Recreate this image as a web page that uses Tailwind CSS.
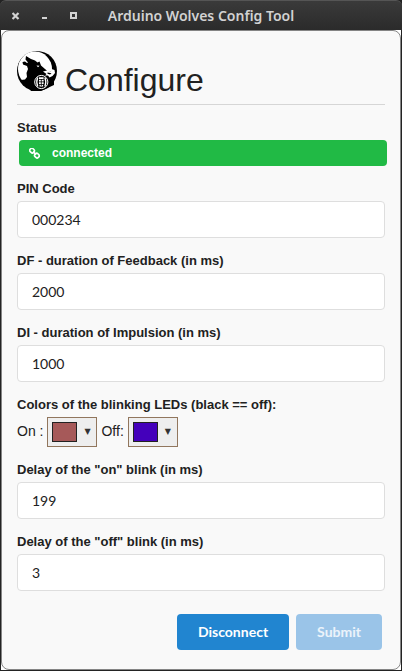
<!DOCTYPE html>
<html lang="en">
<head>
<meta charset="utf-8">
<meta name="viewport" content="width=device-width, initial-scale=1">
<title>Arduino Wolves Config Tool</title>
<script src="https://cdn.jsdelivr.net/npm/@tailwindcss/browser@4"></script>
</head>
<body class="flex min-h-screen flex-col bg-[#232323] font-['Liberation_Sans',Arial,sans-serif] text-sm text-[#212121]">
  <header class="flex h-[30px] items-center rounded-t-md border-t border-[#555] bg-linear-to-b from-[#3a3a3a] to-[#2b2b2b] px-3 text-[#d2d2d2]">
    <div class="flex gap-[21px]">
      <button type="button" aria-label="Close" class="size-2"><svg class="block size-2" viewBox="0 0 8 8" fill="none" stroke="currentColor" stroke-width="2.2"><path d="M0.500 1l6 6M6.500 1l-6 6"/></svg></button>
      <button type="button" aria-label="Minimize" class="size-2"><svg class="block size-2" viewBox="0 0 8 8" fill="currentColor"><path d="M1 5h5v2H1z"/></svg></button>
      <button type="button" aria-label="Maximize" class="size-2"><svg class="block size-2" viewBox="0 0 8 8" fill="none" stroke="currentColor" stroke-width="2"><path d="M1 1h5v5h-5z"/></svg></button>
    </div>
    <div class="grow pr-[66px] text-center font-['Noto_Sans',sans-serif] text-sm font-semibold whitespace-nowrap">Arduino Wolves Config Tool</div>
  </header>

  <div class="mx-px mb-px flex grow flex-col bg-white">
    <main class="grow rounded-lg border border-[#858585] bg-[#f9f9f9] px-[15px] pt-5 pb-4">
      <h1 class="flex items-end gap-2 border-b border-[#d6d6d6] pb-[13px] text-[32px] leading-10">
        <svg class="size-10 shrink-0" viewBox="0 0 40 40" role="img" aria-label="Wolf logo">
          <circle cx="20" cy="20" r="20" fill="#000"/>
          <ellipse cx="18" cy="18" rx="17" ry="17.500" fill="#fff"/>
          <path fill="#000" d="M9 5L11.500 6.500 14 8 18 9.500 20.500 11.500 22.500 10.500 24 14.500 28 18 31 20 37 21V34L24 40H14L10 35 6 31 4 29 8 28.500 10 26 9.500 22 11 18 10 15 6 13.500 5.500 11 8 10.500 10 12 11 11.500 8.500 8.500Z"/>
          <path fill="#fff" d="M19.500 14.500L22.500 14.700 21 16.200ZM26 20.500L30 19.500 28 17.500 31 18 33 20.500 34.500 20 33 17.500 37.500 19 38 22 35.500 25 32.500 26.500 31 24.500 28 24.500 29.500 23Z"/>
          <path fill="#000" d="M30.500 21.500l4 .8-1.500 1.200-2.500-.7z"/>
          <circle cx="24.300" cy="31" r="6.600" fill="#000" stroke="#fff" stroke-width="1"/>
          <path fill="none" stroke="#fff" stroke-width="1.300" d="M20.700 26.500c-1.200 3-1.200 6 0 9M27.900 26.500c1.200 3 1.200 6 0 9"/>
          <path fill="none" stroke="#fff" stroke-width="1.700" d="M22 27.200h4.600M22 29.700h4.600M22 32.200h4.600M22.500 34.700h3.600"/>
          <path stroke="#000" stroke-width=".8" d="M24.300 28v7"/>
        </svg>
        <span class="h-[31px]">Configure</span>
      </h1>

      <form class="mt-[14px] flex flex-col gap-[14px]">
        <section class="flex flex-col gap-1">
          <h2 class="text-[13px] leading-[17px] font-bold">Status</h2>
          <div role="status" class="-mr-0.5 ml-0.5 flex h-[26px] items-center gap-3 rounded bg-[#21ba45] px-2.5 text-xs font-bold text-white">
            <svg class="size-[11px]" viewBox="0 0 11 11" fill="none" stroke="currentColor" stroke-width="1.600" aria-hidden="true"><rect x=".8" y=".6" width="4.600" height="4" rx="1.700" transform="rotate(45 3.100 2.600)"/><rect x="5.600" y="5.600" width="4.600" height="4" rx="1.700" transform="rotate(45 7.900 7.600)"/><path d="M4 3.700l3.200 3"/></svg>
            <span>connected</span>
          </div>
        </section>

        <div class="flex flex-col gap-1">
          <label for="pin" class="text-[13px] leading-[17px] font-bold">PIN Code</label>
          <input id="pin" type="text" value="000234" class="h-[37px] w-full rounded border border-[#dedede] bg-white px-[14px] font-['Lato',sans-serif] text-sm">
        </div>
        <div class="flex flex-col gap-1">
          <label for="df" class="text-[13px] leading-[17px] font-bold">DF - duration of Feedback (in ms)</label>
          <input id="df" type="text" value="2000" class="h-[37px] w-full rounded border border-[#dedede] bg-white px-[14px] font-['Lato',sans-serif] text-sm">
        </div>
        <div class="flex flex-col gap-1">
          <label for="di" class="text-[13px] leading-[17px] font-bold">DI - duration of Impulsion (in ms)</label>
          <input id="di" type="text" value="1000" class="h-[37px] w-full rounded border border-[#dedede] bg-white px-[14px] font-['Lato',sans-serif] text-sm">
        </div>

        <fieldset>
          <legend class="mb-1 text-[13px] leading-[17px] font-bold">Colors of the blinking LEDs (black == off):</legend>
          <div class="flex items-center gap-1">
            <label for="on-color" class="pb-0.5">On :</label>
            <button id="on-color" type="button" aria-haspopup="true" class="flex h-[30px] w-[50px] items-center gap-[7px] border border-[#91765d] bg-[#eee] px-1 text-[#333]">
              <span class="h-5 w-[25px] border border-[#222] bg-[#a65959]"></span>
              <span class="font-['DejaVu_Sans',sans-serif] text-[8px]">▼</span>
            </button>
            <label for="off-color" class="pb-0.5">Off:</label>
            <button id="off-color" type="button" aria-haspopup="true" class="flex h-[30px] w-[50px] items-center gap-[7px] border border-[#91765d] bg-[#eee] px-1 text-[#333]">
              <span class="h-5 w-[25px] border border-[#222] bg-[#4400bb]"></span>
              <span class="font-['DejaVu_Sans',sans-serif] text-[8px]">▼</span>
            </button>
          </div>
        </fieldset>

        <div class="flex flex-col gap-1">
          <label for="on-delay" class="text-[13px] leading-[17px] font-bold">Delay of the "on" blink (in ms)</label>
          <input id="on-delay" type="text" value="199" class="h-[37px] w-full rounded border border-[#dedede] bg-white px-[14px] font-['Lato',sans-serif] text-sm">
        </div>
        <div class="flex flex-col gap-1">
          <label for="off-delay" class="text-[13px] leading-[17px] font-bold">Delay of the "off" blink (in ms)</label>
          <input id="off-delay" type="text" value="3" class="h-[37px] w-full rounded border border-[#dedede] bg-white px-[14px] font-['Lato',sans-serif] text-sm">
        </div>

        <div class="mt-[9px] mr-[3px] flex justify-end gap-[7px] font-['Lato',sans-serif] font-bold text-white">
          <button type="button" class="h-9 rounded bg-[#2185d0] px-[21px]">Disconnect</button>
          <button type="submit" disabled class="h-9 rounded bg-[#9ac4e8] px-[21px] text-white/80">Submit</button>
        </div>
      </form>
    </main>
  </div>
</body>
</html>
